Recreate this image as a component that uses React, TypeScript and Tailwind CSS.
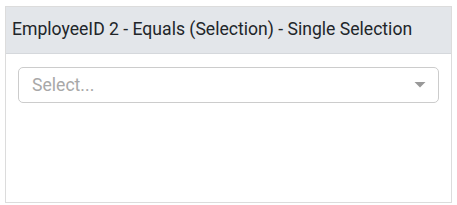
export default function App() {
  return (
    <div className="bg-white w-[457px] h-[205px] pt-[6px] pl-[5px] font-['Roboto',sans-serif]">
      <div className="w-[447px] h-[197px] border border-[#dcdcdc] flex flex-col">
        <div className="h-[47px] bg-[#e3e6ea] border-b border-[#d5d8dc] flex items-center px-[6px]">
          <span className="text-[17.6px] text-[#212529] leading-none">
            EmployeeID 2 - Equals (Selection) - Single Selection
          </span>
        </div>
        <div className="px-[12px] pt-[13px]">
          <div className="h-[36px] border border-[#cccccc] rounded-[5px] flex items-center justify-between pl-[13px] pr-[11px]">
            <span className="text-[17.6px] text-[#a8a8a8]">Select...</span>
            <svg width="14" height="8" viewBox="0 0 14 8">
              <path d="M1.5 1 L12.5 1 L7 6.5 Z" fill="#999999" />
            </svg>
          </div>
        </div>
      </div>
    </div>
  );
}
